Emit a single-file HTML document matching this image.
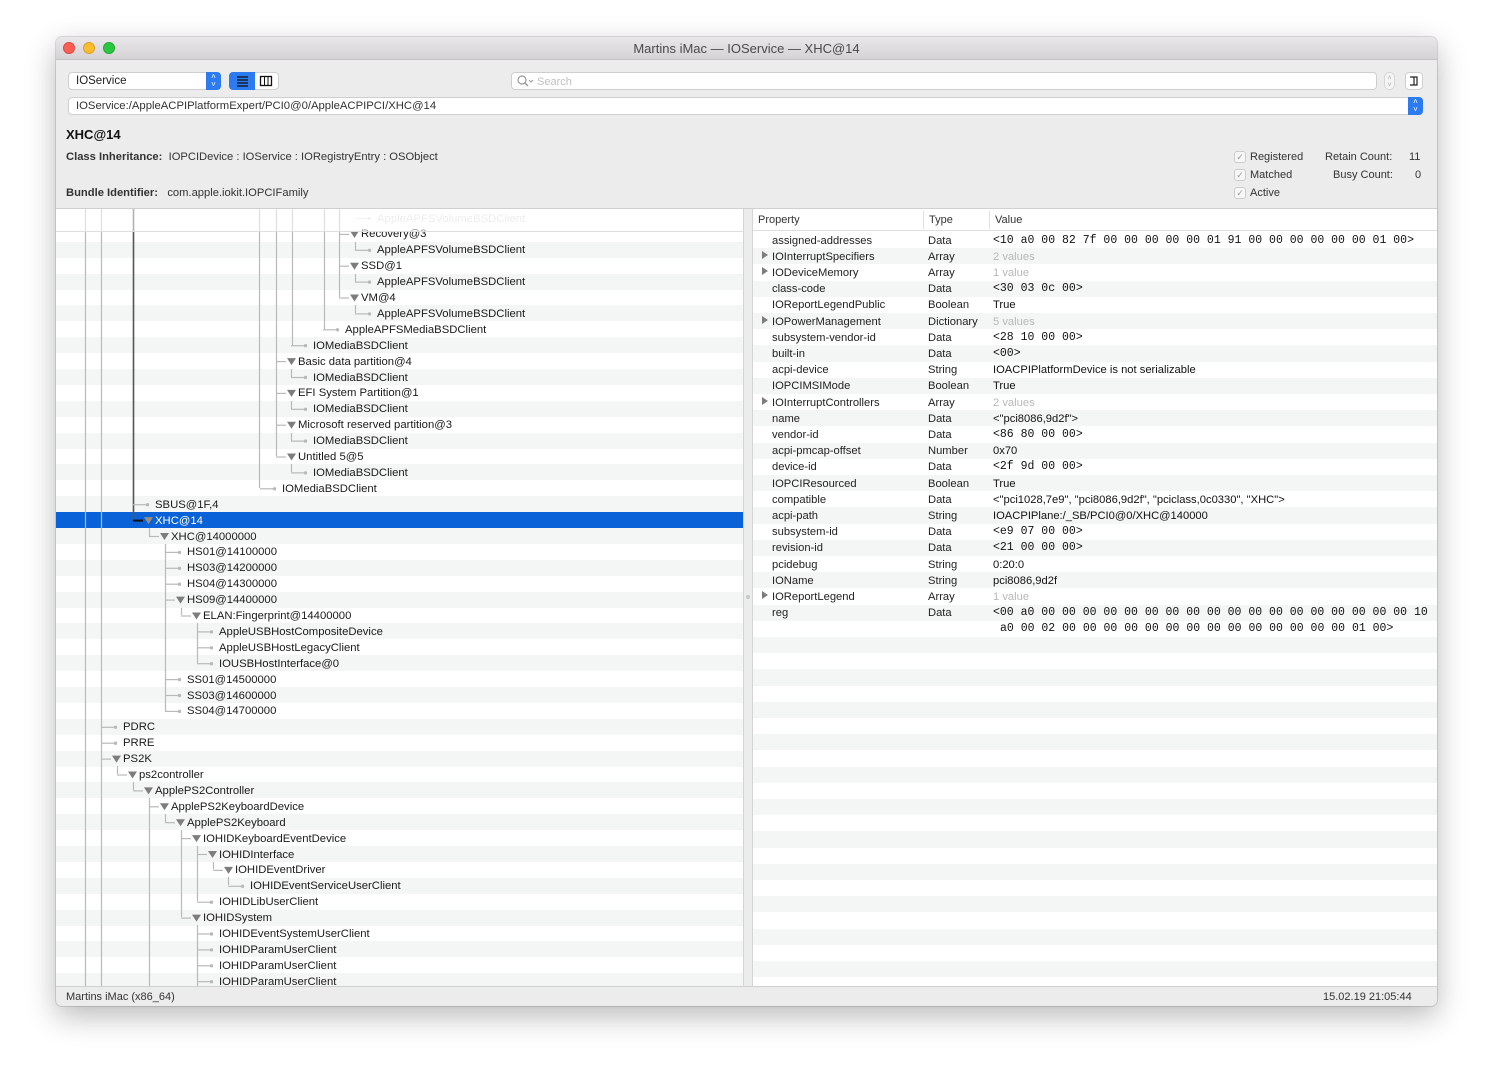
<!DOCTYPE html>
<html><head><meta charset="utf-8">
<style>
*{margin:0;padding:0;box-sizing:border-box}
body{width:1493px;height:1080px;background:#fff;font-family:"Liberation Sans",sans-serif;font-size:11px;color:#222;position:relative;overflow:hidden}
.a{position:absolute;white-space:nowrap}
#win{position:absolute;left:56px;top:37px;width:1381px;height:969px;border-radius:6px;background:#ececec;box-shadow:0 10px 30px rgba(0,0,0,.28),0 0 0 1px rgba(0,0,0,.12);overflow:hidden}
.mono{font-family:"Liberation Mono",monospace;font-size:11.5px}
</style></head><body>
<div id="win"></div>
<div class="a" style="left:56px;top:37px;width:1381px;height:23px;background:linear-gradient(#e9e7e9,#d5d3d5);border-bottom:1px solid #c4c4c4;border-radius:6px 6px 0 0"></div>
<div class="a" style="left:63px;top:42px;width:12px;height:12px;border-radius:50%;background:#fd5f57;border:1px solid #e1443d"></div>
<div class="a" style="left:83px;top:42px;width:12px;height:12px;border-radius:50%;background:#febc2e;border:1px solid #dfa023"></div>
<div class="a" style="left:103px;top:42px;width:12px;height:12px;border-radius:50%;background:#28c840;border:1px solid #1eab2e"></div>
<div class="a" style="left:0;width:1493px;top:41px;text-align:center;font-size:13px;color:#4a4a4a">Martins iMac — IOService — XHC@14</div>

<div class="a" style="left:68px;top:72px;width:153px;height:18px;background:#fff;border:1px solid #cfcfcf;border-radius:4px"></div>
<div class="a" style="left:76px;top:75px;font-size:11.5px">IOService</div>
<div class="a" style="left:206px;top:72px;width:15px;height:18px;background:#2d7bf0;border-radius:0 4px 4px 0;color:#fff;font-size:8px;line-height:8px;text-align:center;padding-top:1px">˄<br>˅</div>
<div class="a" style="left:229px;top:72px;width:50px;height:18px;background:#fff;border:1px solid #cfcfcf;border-radius:4px"></div>
<div class="a" style="left:229px;top:72px;width:26px;height:18px;background:#2d7bf0;border-radius:4px 0 0 4px"></div>
<svg class="a" style="left:229px;top:72px" width="50" height="18"><g stroke="#111" stroke-width="1.3"><line x1="8" y1="5" x2="19" y2="5"/><line x1="8" y1="8" x2="19" y2="8"/><line x1="8" y1="11" x2="19" y2="11"/><line x1="8" y1="14" x2="19" y2="14"/></g><rect x="31.5" y="4.5" width="11" height="9" fill="none" stroke="#111" stroke-width="1.3"/><line x1="35.5" y1="4" x2="35.5" y2="14" stroke="#111"/><line x1="39" y1="4" x2="39" y2="14" stroke="#111"/></svg>
<div class="a" style="left:511px;top:72px;width:866px;height:18px;background:#fff;border:1px solid #cfcfcf;border-radius:4px"></div>
<svg class="a" style="left:516px;top:74px" width="20" height="14"><circle cx="6" cy="6" r="4" fill="none" stroke="#999" stroke-width="1.2"/><line x1="9" y1="9" x2="12" y2="12" stroke="#999" stroke-width="1.4"/><path d="M13 6 l2 2 2-2" fill="none" stroke="#999"/></svg>
<div class="a" style="left:537px;top:76px;color:#c0c0c0">Search</div>
<div class="a" style="left:1384px;top:72px;width:11px;height:18px;border:1px solid #d6d6d6;border-radius:5px;background:#f4f4f4;color:#aaa;font-size:7px;line-height:7px;text-align:center;padding-top:2px">˄<br>˅</div>
<div class="a" style="left:1405px;top:72px;width:18px;height:18px;background:#fff;border:1px solid #cfcfcf;border-radius:4px"></div>
<svg class="a" style="left:1405px;top:72px" width="18" height="18"><path d="M5 5 H12 V13 H5 M9 5 V13" fill="none" stroke="#222" stroke-width="1.2"/></svg>
<div class="a" style="left:68px;top:97px;width:1355px;height:18px;background:#fff;border:1px solid #cfcfcf;border-radius:4px"></div>
<div class="a" style="left:76px;top:100px;font-size:11.3px;color:#333">IOService:/AppleACPIPlatformExpert/PCI0@0/AppleACPIPCI/XHC@14</div>
<div class="a" style="left:1408px;top:97px;width:15px;height:18px;background:#2d7bf0;border-radius:0 4px 4px 0;color:#fff;font-size:8px;line-height:8px;text-align:center;padding-top:1px">˄<br>˅</div>

<div class="a" style="left:66px;top:127px;font-size:13px;font-weight:bold;color:#111">XHC@14</div>
<div class="a" style="left:66px;top:151px;color:#333;font-size:11.2px"><b>Class Inheritance:</b>&nbsp;&nbsp;IOPCIDevice : IOService : IORegistryEntry : OSObject</div>
<div class="a" style="left:66px;top:187px;color:#333;font-size:11.2px"><b>Bundle Identifier:</b>&nbsp;&nbsp;&nbsp;com.apple.iokit.IOPCIFamily</div>

<div id="chk"></div>
<div class="a" style="left:1250px;top:151px;color:#333">Registered</div>
<div class="a" style="left:1250px;top:169px;color:#333">Matched</div>
<div class="a" style="left:1250px;top:187px;color:#333">Active</div>
<div class="a" style="left:1325px;top:151px;color:#333">Retain Count:</div>
<div class="a" style="left:1333px;top:169px;color:#333">Busy Count:</div>
<div class="a" style="left:1409px;top:151px;color:#333">11</div>
<div class="a" style="left:1415px;top:169px;color:#333">0</div>

<div class="a" style="left:56px;top:208px;width:1381px;height:1px;background:#d0d0d0"></div>
<div class="a" style="left:56px;top:209px;width:687px;height:777px;background:#fff;overflow:hidden" id="tree"></div>
<div class="a" style="left:743px;top:209px;width:10px;height:777px;background:#ececec;border-left:1px solid #d5d5d5;border-right:1px solid #d5d5d5"></div>
<div class="a" style="left:746px;top:595px;width:4px;height:4px;border-radius:50%;background:#c8c8c8"></div>
<div class="a" style="left:753px;top:209px;width:684px;height:777px;background:#fff;overflow:hidden" id="props"></div>

<div class="a" style="left:56px;top:986px;width:1381px;height:1px;background:#d0d0d0"></div>
<div class="a" style="left:66px;top:991px;color:#333">Martins iMac (x86_64)</div>
<div class="a" style="left:1323px;top:991px;color:#333">15.02.19 21:05:44</div>

<script>
var ch='';[157,175,193].forEach(function(y){ch+='<div class="a" style="left:1234px;top:'+(y-6)+'px;width:12px;height:12px;border:1px solid #ccc;border-radius:3px;background:#f7f7f7;color:#999;font-size:9px;line-height:11px;text-align:center">✓</div>';});
document.getElementById('chk').outerHTML=ch;

var rows=[
["AppleAPFSVolumeBSDClient",377,0],["Recovery@3",361,1],["AppleAPFSVolumeBSDClient",377,0],["SSD@1",361,1],["AppleAPFSVolumeBSDClient",377,0],["VM@4",361,1],["AppleAPFSVolumeBSDClient",377,0],["AppleAPFSMediaBSDClient",345,0],["IOMediaBSDClient",313,0],["Basic data partition@4",298,1],["IOMediaBSDClient",313,0],["EFI System Partition@1",298,1],["IOMediaBSDClient",313,0],["Microsoft reserved partition@3",298,1],["IOMediaBSDClient",313,0],["Untitled 5@5",298,1],["IOMediaBSDClient",313,0],["IOMediaBSDClient",282,0],["SBUS@1F,4",155,0],["XHC@14",155,1],["XHC@14000000",171,1],["HS01@14100000",187,0],["HS03@14200000",187,0],["HS04@14300000",187,0],["HS09@14400000",187,1],["ELAN:Fingerprint@14400000",203,1],["AppleUSBHostCompositeDevice",219,0],["AppleUSBHostLegacyClient",219,0],["IOUSBHostInterface@0",219,0],["SS01@14500000",187,0],["SS03@14600000",187,0],["SS04@14700000",187,0],["PDRC",123,0],["PRRE",123,0],["PS2K",123,1],["ps2controller",139,1],["ApplePS2Controller",155,1],["ApplePS2KeyboardDevice",171,1],["ApplePS2Keyboard",187,1],["IOHIDKeyboardEventDevice",203,1],["IOHIDInterface",219,1],["IOHIDEventDriver",235,1],["IOHIDEventServiceUserClient",250,0],["IOHIDLibUserClient",219,0],["IOHIDSystem",203,1],["IOHIDEventSystemUserClient",219,0],["IOHIDParamUserClient",219,0],["IOHIDParamUserClient",219,0],["IOHIDParamUserClient",219,0]];
var OX=56,OY=209,P=15.9;
function cy(i){return 218+i*P;}
var bg='',svg='',tx='';
for(var i=1;i<rows.length+1;i++){var t=cy(i)-8;if(i%2==0)bg+='<div class="a" style="left:0;top:'+(t-OY)+'px;width:687px;height:16px;background:#f4f5f5"></div>';}
bg+='<div class="a" style="left:0;top:'+(cy(19)-8-OY)+'px;width:687px;height:16px;background:#0a62d8"></div>';
var V=[[85,209,986],[101,209,986],[259,209,488],[276,209,456],[292,209,345],[324,209,329],[339,209,297],[355,242,250],[355,274,282],[355,305,313],[291,369,377],[291,401,409],[291,433,441],[291,464,472],[149,528,536],[165,544,711],[181,608,615],[197,623,663],[117,766,774],[133,782,790],[149,798,986],[165,814,822],[181,830,917],[197,846,901],[213,862,869],[228,877,885],[197,925,986]];
V.forEach(function(v){svg+='<line x1="'+(v[0]+.5-OX)+'" y1="'+(v[1]-OY)+'" x2="'+(v[0]+.5-OX)+'" y2="'+(v[2]-OY)+'" stroke="#b9b9b9" stroke-width="1.2"/>';});
svg+='<line x1="'+(133.5-OX)+'" y1="0" x2="'+(133.5-OX)+'" y2="'+(cy(19)-OY)+'" stroke="#555" stroke-width="1.6"/>';
rows.forEach(function(r,i){
 var c=cy(i)-OY,X=r[1]-OX,sel=i==19,col=sel?'#111':'#b9b9b9',fade=i==0;
 var op=fade?' opacity="0.35"':'';
 if(r[2]){svg+='<line x1="'+(X-22)+'" y1="'+(c+.5)+'" x2="'+(X-12)+'" y2="'+(c+.5)+'" stroke="'+col+'" stroke-width="'+(sel?2:1.2)+'"'+op+'/><path d="M'+(X-11)+' '+(c-3)+' L'+(X-2)+' '+(c-3)+' L'+(X-6.5)+' '+(c+4)+'Z" fill="'+(sel?'#9a8c7e':'#7d7d7d')+'"'+op+'/>';}
 else{svg+='<line x1="'+(X-22)+'" y1="'+(c+.5)+'" x2="'+(X-8)+'" y2="'+(c+.5)+'" stroke="'+col+'" stroke-width="1.2"'+op+'/><circle cx="'+(X-7.5)+'" cy="'+(c+.5)+'" r="1.7" fill="#b9b9b9"'+op+'/>';}
 tx+='<div class="a" style="left:'+X+'px;top:'+(c-6.5)+'px;line-height:14px;font-size:11.3px;color:'+(sel?'#fff':fade?'#d8d8d8':'#1a1a1a')+'">'+r[0]+'</div>';
});
var h=bg+'<svg class="a" style="left:0;top:0" width="687" height="777">'+svg+'</svg>'+tx;
h+='<div class="a" style="left:0;top:0;width:687px;height:22px;background:rgba(255,255,255,.55)"></div>';
h+='<div class="a" style="left:0;top:22px;width:687px;height:1px;background:#dedede"></div>';
document.getElementById('tree').innerHTML=h;

var PR=[
["assigned-addresses",0,"Data","<10 a0 00 82 7f 00 00 00 00 00 01 91 00 00 00 00 00 00 01 00>","m"],
["IOInterruptSpecifiers",1,"Array","2 values","g"],
["IODeviceMemory",1,"Array","1 value","g"],
["class-code",0,"Data","<30 03 0c 00>","m"],
["IOReportLegendPublic",0,"Boolean","True",""],
["IOPowerManagement",1,"Dictionary","5 values","g"],
["subsystem-vendor-id",0,"Data","<28 10 00 00>","m"],
["built-in",0,"Data","<00>","m"],
["acpi-device",0,"String","IOACPIPlatformDevice is not serializable",""],
["IOPCIMSIMode",0,"Boolean","True",""],
["IOInterruptControllers",1,"Array","2 values","g"],
["name",0,"Data","<\"pci8086,9d2f\">",""],
["vendor-id",0,"Data","<86 80 00 00>","m"],
["acpi-pmcap-offset",0,"Number","0x70",""],
["device-id",0,"Data","<2f 9d 00 00>","m"],
["IOPCIResourced",0,"Boolean","True",""],
["compatible",0,"Data","<\"pci1028,7e9\", \"pci8086,9d2f\", \"pciclass,0c0330\", \"XHC\">",""],
["acpi-path",0,"String","IOACPIPlane:/_SB/PCI0@0/XHC@140000",""],
["subsystem-id",0,"Data","<e9 07 00 00>","m"],
["revision-id",0,"Data","<21 00 00 00>","m"],
["pcidebug",0,"String","0:20:0",""],
["IOName",0,"String","pci8086,9d2f",""],
["IOReportLegend",1,"Array","1 value","g"],
["reg",0,"Data","<00 a0 00 00 00 00 00 00 00 00 00 00 00 00 00 00 00 00 00 00 10","m"]];
function esc(s){return s.replace(/&/g,'&amp;').replace(/</g,'&lt;').replace(/>/g,'&gt;');}
var q='',PP=16.2;
for(var j=0;j<48;j++){var t=240+j*PP-8;if(j%2==1)q+='<div class="a" style="left:0;top:'+(t-209)+'px;width:684px;height:16.2px;background:#f4f5f5"></div>';}
q+='<div class="a" style="left:0;top:0;width:684px;height:22px;background:#fff;border-bottom:1px solid #dedede"></div>';
q+='<div class="a" style="left:5px;top:5px;color:#333">Property</div><div class="a" style="left:170px;top:2px;width:1px;height:18px;background:#e0e0e0"></div><div class="a" style="left:176px;top:5px;color:#333">Type</div><div class="a" style="left:236px;top:2px;width:1px;height:18px;background:#e0e0e0"></div><div class="a" style="left:242px;top:5px;color:#333">Value</div>';
PR.forEach(function(p,j){var c=240+j*PP-209;
 if(p[1])q+='<div class="a" style="left:9px;top:'+(c-5)+'px;width:0;height:0;border-top:4px solid transparent;border-bottom:4px solid transparent;border-left:6px solid #7d7d7d"></div>';
 q+='<div class="a" style="left:19px;top:'+(c-6.5)+'px;line-height:14px;font-size:11.2px;color:#222">'+p[0]+'</div>';
 q+='<div class="a" style="left:175px;top:'+(c-6.5)+'px;line-height:14px;font-size:11.2px;color:#222">'+p[2]+'</div>';
 q+='<div class="a '+(p[4]=='m'?'mono':'')+'" style="left:240px;top:'+(c-6.5)+'px;line-height:14px;'+(p[4]=='m'?'':'font-size:11.2px;')+'color:'+(p[4]=='g'?'#b8b8b8':'#111')+'">'+esc(p[3])+'</div>';
});
q+='<div class="a mono" style="left:247px;top:'+(240+24*PP-209-6.5)+'px;line-height:14px;color:#111">a0 00 02 00 00 00 00 00 00 00 00 00 00 00 00 00 00 01 00&gt;</div>';
document.getElementById('props').innerHTML=q;
</script>
</body></html>
